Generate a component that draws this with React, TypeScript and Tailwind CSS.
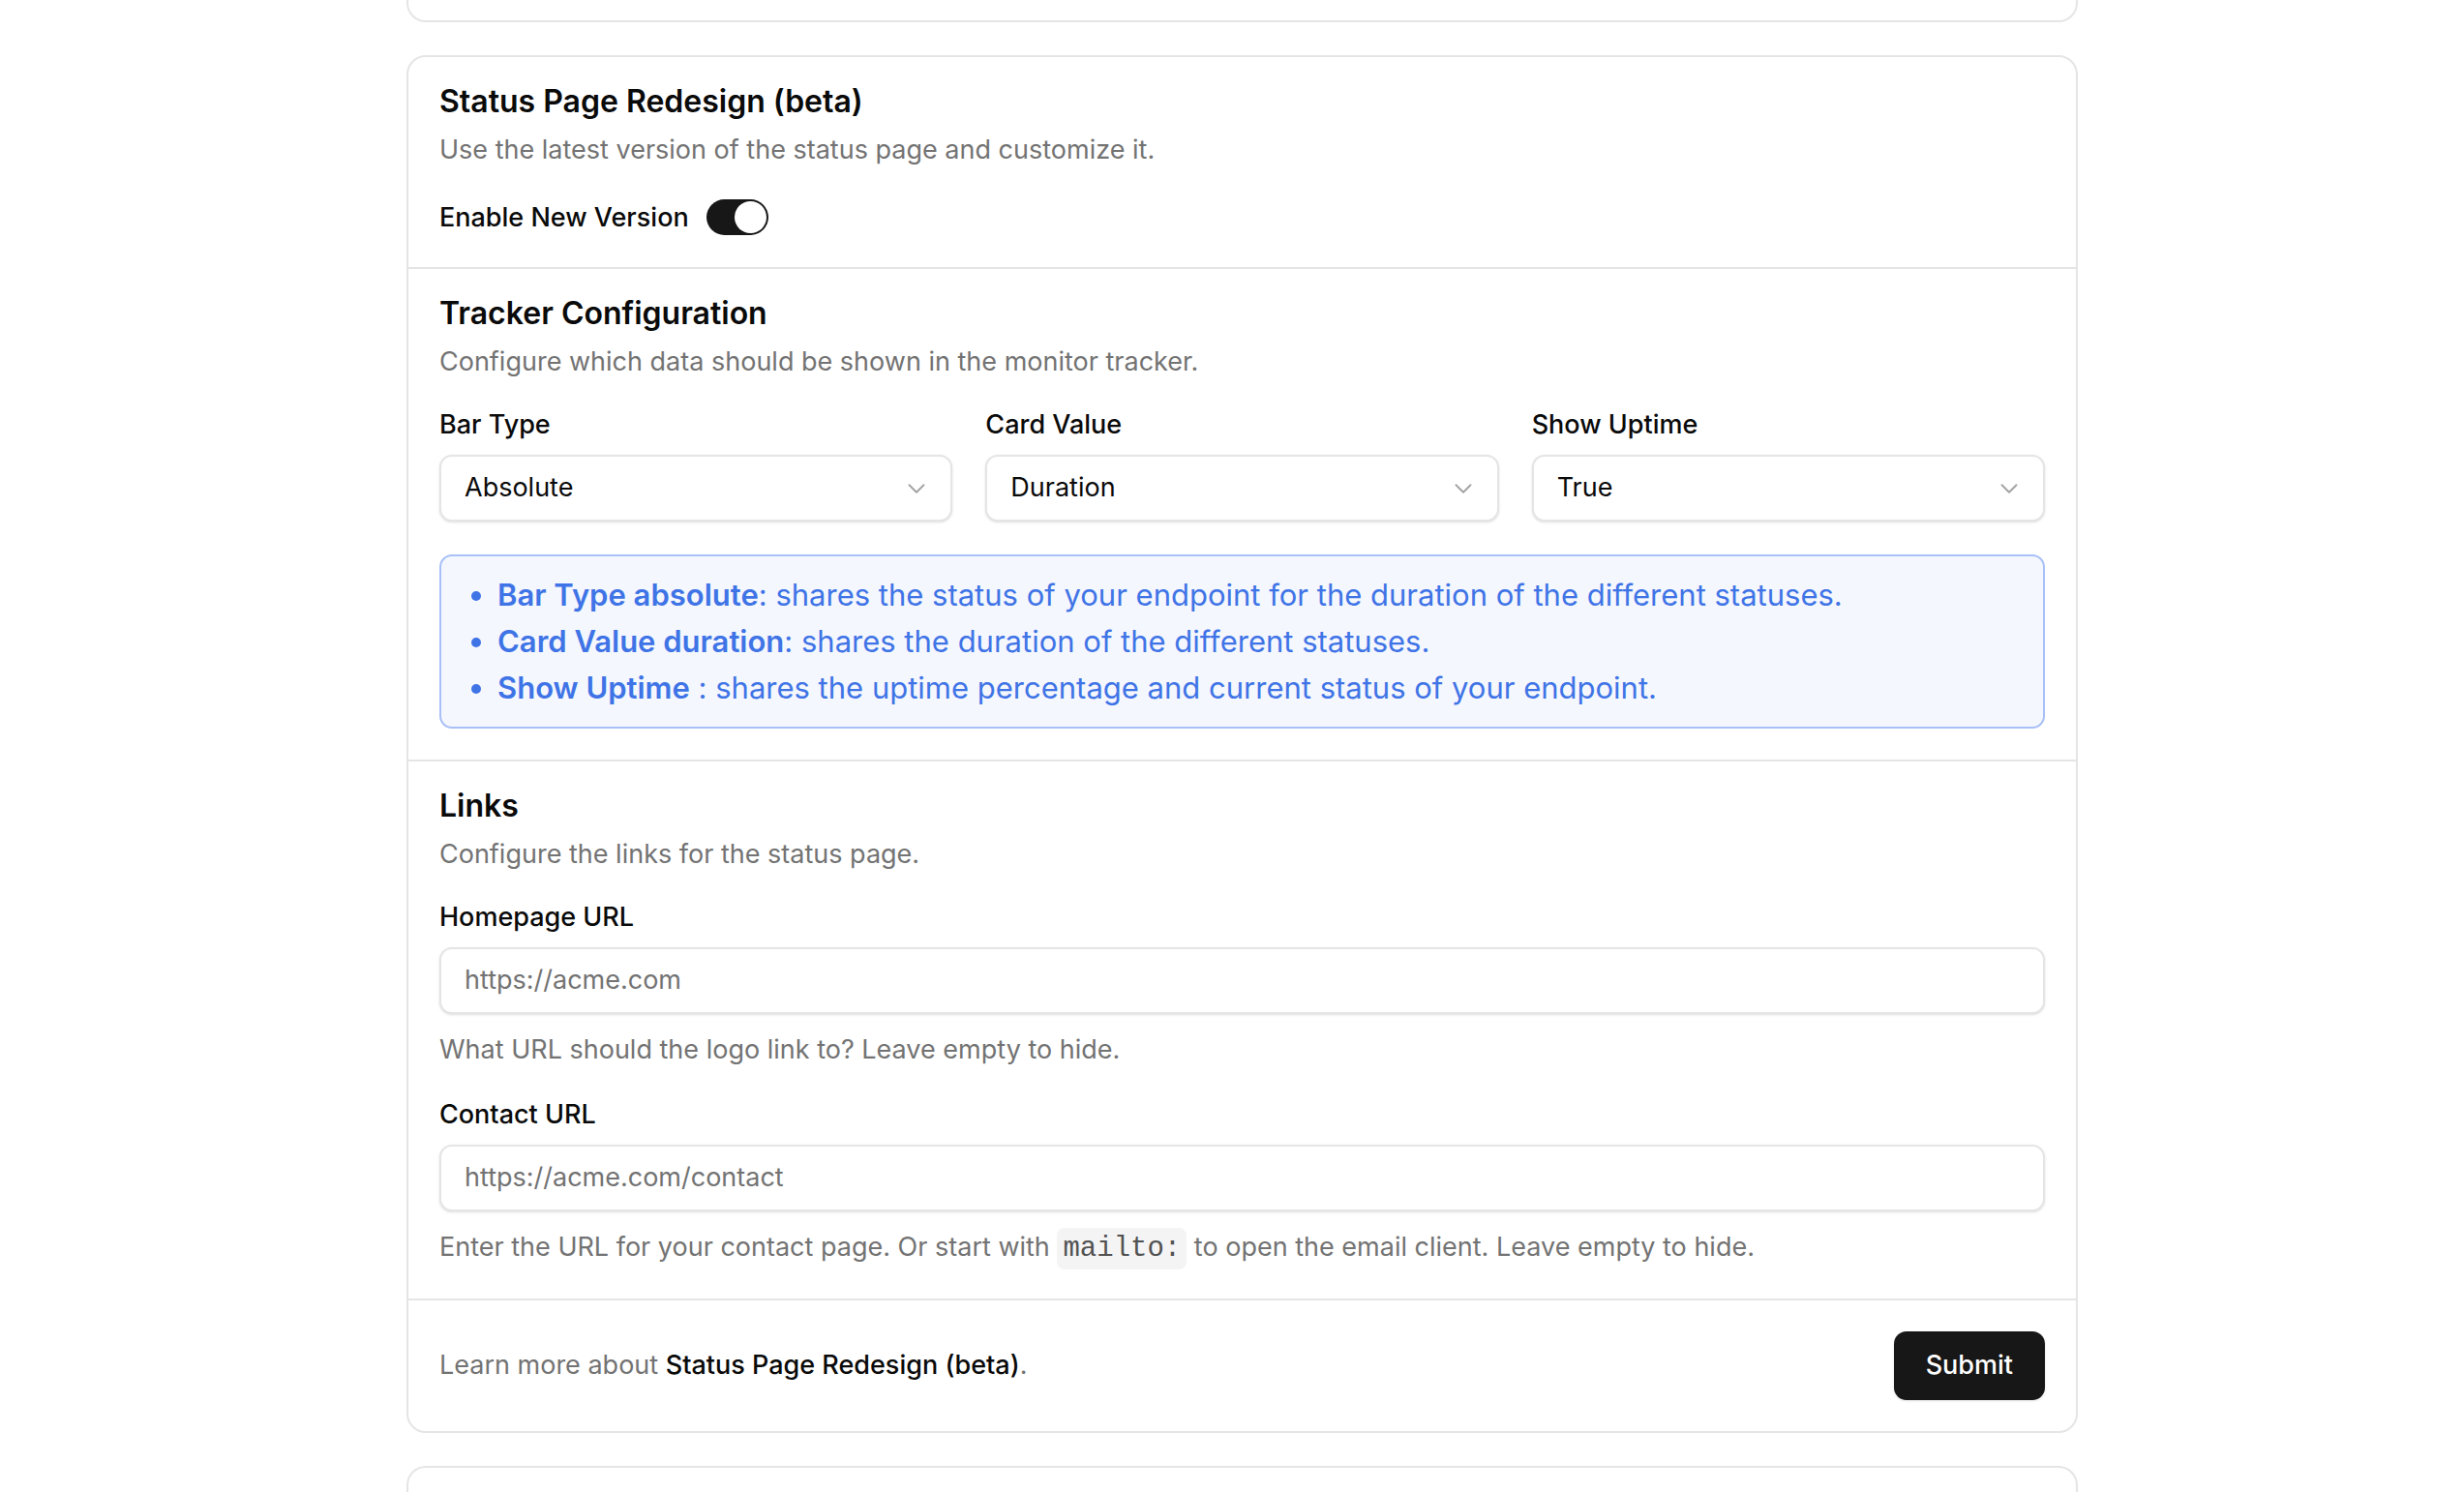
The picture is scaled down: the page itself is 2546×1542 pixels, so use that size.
import { ChevronDown } from "lucide-react";

function Select({ label, value }: { label: string; value: string }) {
  return (
    <div className="flex flex-col gap-[12px]">
      <span className="text-[27px] leading-[39px] font-medium text-[#0a0a0a]">{label}</span>
      <div className="flex h-[69px] items-center justify-between rounded-[13px] border-2 border-[#e5e5e5] bg-white pr-[20px] pl-[24px] shadow-sm">
        <span className="text-[27px] text-[#0a0a0a]">{value}</span>
        <ChevronDown className="h-[30px] w-[30px] text-[#a3a3a3]" strokeWidth={1.5} />
      </div>
    </div>
  );
}

function UrlField({ label, placeholder, children }: { label: string; placeholder: string; children: React.ReactNode }) {
  return (
    <div className="flex flex-col">
      <span className="text-[27px] leading-[39px] font-medium text-[#0a0a0a]">{label}</span>
      <div className="mt-[12px] flex h-[69px] items-center rounded-[13px] border-2 border-[#e5e5e5] bg-white px-[24px] shadow-sm">
        <span className="text-[27px] text-[#737373]">{placeholder}</span>
      </div>
      <p className="mt-[17px] text-[27px] leading-[39px] text-[#737373]">{children}</p>
    </div>
  );
}

export default function App() {
  return (
    <div className="min-h-screen bg-white font-['Inter',sans-serif] text-[#0a0a0a]">
      <div className="ml-[420px] flex w-[1727px] flex-col gap-[34px]">
        {/* previous card, mostly scrolled away */}
        <div className="h-[23px] rounded-b-[20px] border-2 border-t-0 border-[#e5e5e5]" />

        <div className="rounded-[20px] border-2 border-[#e5e5e5] bg-white">
          {/* Status Page Redesign */}
          <div className="border-b-2 border-[#e5e5e5] px-[32px] pt-[31px] pb-[32px]">
            <h3 className="text-[32px] leading-[30px] font-semibold">Status Page Redesign (beta)</h3>
            <p className="mt-[15px] text-[27px] leading-[39px] text-[#737373]">
              Use the latest version of the status page and customize it.
            </p>
            <div className="mt-[31px] flex items-center gap-[18px]">
              <span className="text-[27px] leading-[39px] font-medium">Enable New Version</span>
              <div className="flex h-[37px] w-[64px] items-center justify-end rounded-full bg-[#171717] p-[2px]">
                <div className="h-[33px] w-[33px] rounded-full bg-white" />
              </div>
            </div>
          </div>

          {/* Tracker Configuration */}
          <div className="border-b-2 border-[#e5e5e5] px-[32px] pt-[31px] pb-[32px]">
            <h3 className="text-[32px] leading-[30px] font-semibold">Tracker Configuration</h3>
            <p className="mt-[15px] text-[27px] leading-[39px] text-[#737373]">
              Configure which data should be shown in the monitor tracker.
            </p>
            <div className="mt-[26px] grid grid-cols-3 gap-[34px]">
              <Select label="Bar Type" value="Absolute" />
              <Select label="Card Value" value="Duration" />
              <Select label="Show Uptime" value="True" />
            </div>
            <div className="mt-[34px] rounded-[13px] border-2 border-[#a8c0f7] bg-[#f5f7fe] px-[24px] py-[16px]">
              <ul className="list-disc pl-[34px] text-[31px] leading-[48px] text-[#3f74e6] marker:text-[#3f74e6]">
                <li>
                  <span className="font-semibold">Bar Type absolute</span>: shares the status of your endpoint for the duration of the different statuses.
                </li>
                <li>
                  <span className="font-semibold">Card Value duration</span>: shares the duration of the different statuses.
                </li>
                <li>
                  <span className="font-semibold">Show Uptime</span> : shares the uptime percentage and current status of your endpoint.
                </li>
              </ul>
            </div>
          </div>

          {/* Links */}
          <div className="border-b-2 border-[#e5e5e5] px-[32px] pt-[31px] pb-[32px]">
            <h3 className="text-[32px] leading-[30px] font-semibold">Links</h3>
            <p className="mt-[15px] text-[27px] leading-[39px] text-[#737373]">Configure the links for the status page.</p>
            <div className="mt-[26px] flex flex-col gap-[28px]">
              <UrlField label="Homepage URL" placeholder="https://acme.com">
                What URL should the logo link to? Leave empty to hide.
              </UrlField>
              <UrlField label="Contact URL" placeholder="https://acme.com/contact">
                Enter the URL for your contact page. Or start with{" "}
                <code className="rounded-[8px] bg-[#f4f4f5] px-[6px] py-[5px] font-['Liberation_Mono',monospace] text-[29px] text-[#525252]">
                  mailto:
                </code>{" "}
                to open the email client. Leave empty to hide.
              </UrlField>
            </div>
          </div>

          {/* Footer */}
          <div className="flex items-center justify-between px-[32px] py-[32px]">
            <p className="text-[27px] text-[#737373]">
              Learn more about <span className="font-medium text-[#0a0a0a]">Status Page Redesign (beta)</span>.
            </p>
            <button className="h-[71px] rounded-[13px] bg-[#171717] px-[33px] text-[27px] font-medium text-white shadow-sm">
              Submit
            </button>
          </div>
        </div>

        {/* next card */}
        <div className="h-[60px] rounded-t-[20px] border-2 border-b-0 border-[#e5e5e5]" />
      </div>
    </div>
  );
}
